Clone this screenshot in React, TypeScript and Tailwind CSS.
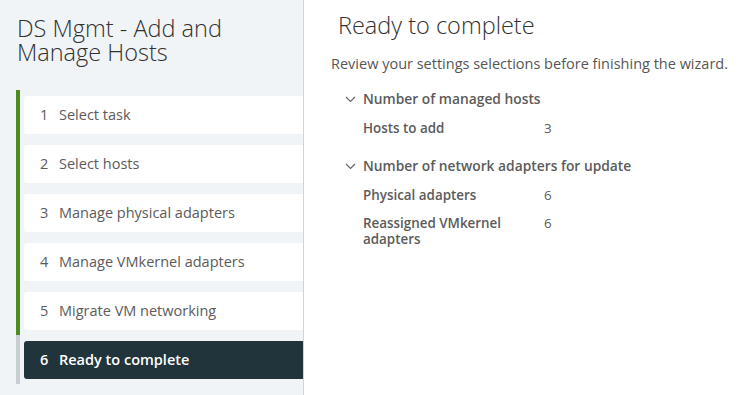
import React from 'react';

const steps = [
  { n: 1, label: 'Select task' },
  { n: 2, label: 'Select hosts' },
  { n: 3, label: 'Manage physical adapters' },
  { n: 4, label: 'Manage VMkernel adapters' },
  { n: 5, label: 'Migrate VM networking' },
  { n: 6, label: 'Ready to complete' },
];

const sections = [
  {
    title: 'Number of managed hosts',
    rows: [{ label: 'Hosts to add', value: '3' }],
  },
  {
    title: 'Number of network adapters for update',
    rows: [
      { label: 'Physical adapters', value: '6' },
      { label: 'Reassigned VMkernel adapters', value: '6' },
    ],
  },
];

function Chevron() {
  return (
    <svg width="11" height="7" viewBox="0 0 11 7" className="shrink-0">
      <path d="M1 1l4.5 4.5L10 1" fill="none" stroke="#666" strokeWidth="1.2" />
    </svg>
  );
}

export default function App() {
  return (
    <div className="flex h-[395px] w-full bg-white font-['Open_Sans',sans-serif] overflow-hidden">
      <aside className="w-[304px] shrink-0 bg-[#f0f4f7] border-r border-[#cfd4d7]">
        <h1 className="pl-[17px] pt-[16px] text-[23.5px] leading-[24px] font-light text-[#313131]">
          <span className="block">DS Mgmt - Add and</span>
          <span className="block">Manage Hosts</span>
        </h1>

        <nav className="mt-[26px] pl-[16px]">
          {steps.map((s) => {
            const current = s.n === 6;
            return (
              <div
                key={s.n}
                className={`border-l-4 pl-1 pt-[6px] pb-[5px] ${current ? 'border-[#c8cfd3]' : 'border-[#4c8b1e]'}`}
              >
                <div
                  className={`flex h-[38px] items-center rounded-l-[3px] pl-[16px] text-[14.5px] ${
                    current ? 'bg-[#21333b] text-white font-semibold' : 'bg-white text-[#5b5b5b]'
                  }`}
                >
                  <span className="w-[19px]">{s.n}</span>
                  <span>{s.label}</span>
                </div>
              </div>
            );
          })}
        </nav>
      </aside>

      <main className="flex-1 pl-[27px] pt-[10px] text-[#565656]">
        <h2 className="ml-[7px] text-[23.5px] leading-[30px] font-light text-[#313131]">Ready to complete</h2>
        <p className="mt-[13px] text-[14.5px] text-[#565656]">
          Review your settings selections before finishing the wizard.
        </p>

        <div className="mt-[15px] pl-[14px]">
          {sections.map((sec) => (
            <section key={sec.title} className="mb-[21px]">
              <div className="flex items-center gap-[7px] h-[20px] text-[13.8px] font-semibold text-[#5b5b5b]">
                <Chevron />
                <span>{sec.title}</span>
              </div>
              <div className="pl-[18px] mt-[10px] space-y-[12px]">
                {sec.rows.map((r) => (
                  <div key={r.label} className="flex text-[13.4px] leading-[16px]">
                    <span className="w-[181px] pr-[14px] font-semibold text-[#5b5b5b]">{r.label}</span>
                    <span className="text-[#5b5b5b]">{r.value}</span>
                  </div>
                ))}
              </div>
            </section>
          ))}
        </div>
      </main>
    </div>
  );
}
